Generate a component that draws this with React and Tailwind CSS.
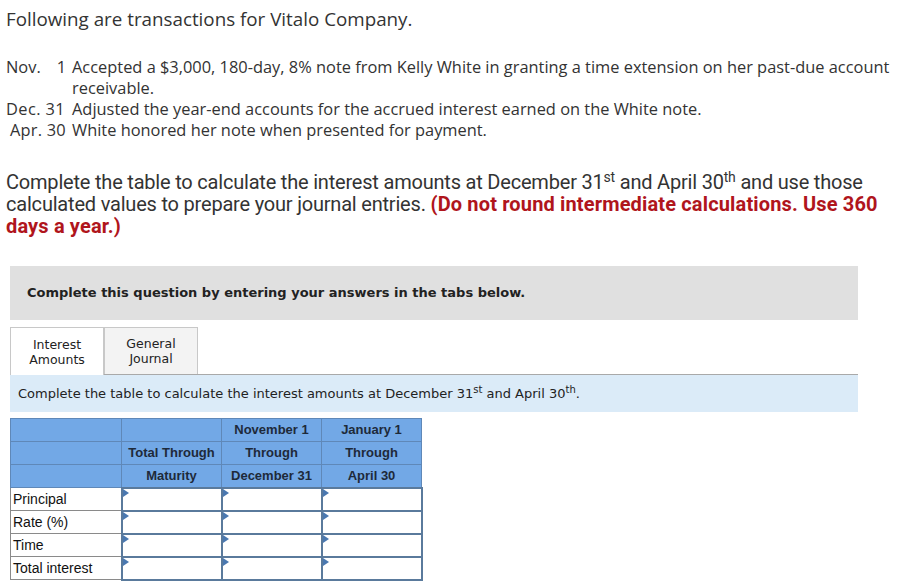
import React from 'react';

const rows = ['Principal', 'Rate (%)', 'Time', 'Total interest'];

const InputCell = () => (
  <td className="relative h-[23px] w-[100px] border-2 border-[#5a7a9c] bg-white p-0">
    <span className="absolute left-0 top-0 h-0 w-0 border-y-[4px] border-l-[6px] border-y-transparent border-l-[#4a78b0]" />
  </td>
);

const App = () => {
  return (
    <div className="w-[906px] h-[586px] bg-white text-[#333] overflow-hidden">
      <div className="pl-[6px] pt-[7px] text-[18.8px] leading-[24px] font-['Open_Sans',sans-serif]">
        Following are transactions for Vitalo Company.
      </div>

      <div className="mt-[25px] pl-[6px] text-[16.4px] leading-[21px] font-['Open_Sans',sans-serif]">
        <div className="flex">
          <span className="w-[60px] shrink-0 flex justify-between">
            <span>Nov.</span>
            <span>1</span>
          </span>
          <span className="pl-[6px]">Accepted a $3,000, 180-day, 8% note from Kelly White in granting a time extension on her past-due account</span>
        </div>
        <div className="pl-[66px]">receivable.</div>
        <div className="flex">
          <span className="w-[60px] shrink-0 tracking-[0.4px]">Dec. 31</span>
          <span className="pl-[6px]">Adjusted the year-end accounts for the accrued interest earned on the White note.</span>
        </div>
        <div className="flex">
          <span className="w-[60px] shrink-0 pl-[4px] tracking-[0.2px]">Apr. 30</span>
          <span className="pl-[6px]">White honored her note when presented for payment.</span>
        </div>
      </div>

      <p className="mt-[31px] pl-[6px] pr-[20px] text-[20px] leading-[22px] font-['Roboto',sans-serif] tracking-[-0.2px] text-[#333]">
        Complete the table to calculate the interest amounts at December 31<sup className="text-[14px] leading-none">st</sup> and April 30<sup className="text-[14px] leading-none">th</sup> and use those calculated values to prepare your journal entries.{' '}
        <span className="font-bold text-[#b0151c] tracking-[0.15px]">(Do not round intermediate calculations. Use 360 days a year.)</span>
      </p>

      <div className="mx-[10px] mt-[29px] w-[848px] h-[54px] bg-[#e0e0e0] flex items-center pl-[17px] font-['DejaVu_Sans',sans-serif] font-bold text-[13px] text-[#222]">
        Complete this question by entering your answers in the tabs below.
      </div>

      <div className="mx-[10px] mt-[7px] w-[848px] flex font-['DejaVu_Sans',sans-serif] text-[12.5px] leading-[15px] text-[#222]">
        <div className="w-[94px] h-[48px] border border-b-0 border-[#c8c8c8] bg-white flex flex-col items-center justify-center relative z-10 -mb-px">
          <span>Interest</span>
          <span>Amounts</span>
        </div>
        <div className="w-[94px] h-[47px] border border-[#c8c8c8] border-b-0 bg-[#f3f3f3] flex flex-col items-center justify-center">
          <span>General</span>
          <span>Journal</span>
        </div>
      </div>
      <div className="mx-[10px] w-[848px] h-[38px] border-t border-[#a9a9a9] bg-[#dbebf8] flex items-center pl-[8px] font-['DejaVu_Sans',sans-serif] text-[13px] text-[#222]">
        <span>
          Complete the table to calculate the interest amounts at December 31<sup className="text-[10px]">st</sup> and April 30<sup className="text-[10px]">th</sup>.
        </span>
      </div>

      <table className="ml-[10px] mt-[6px] border-collapse font-['Liberation_Sans',Arial,sans-serif] text-[13px] text-[#1e2a3a]">
        <thead className="font-bold text-center">
          <tr className="h-[23px] bg-[#72a8e6]">
            <th className="w-[111px] border border-[#5f88b8] p-0" />
            <th className="w-[100px] border border-[#5f88b8] p-0" />
            <th className="w-[100px] border border-[#5f88b8] p-0">November 1</th>
            <th className="w-[100px] border border-[#5f88b8] p-0">January 1</th>
          </tr>
          <tr className="h-[23px] bg-[#72a8e6]">
            <th className="border border-[#5f88b8] p-0" />
            <th className="border border-[#5f88b8] p-0">Total Through</th>
            <th className="border border-[#5f88b8] p-0">Through</th>
            <th className="border border-[#5f88b8] p-0">Through</th>
          </tr>
          <tr className="h-[23px] bg-[#72a8e6]">
            <th className="border border-[#5f88b8] p-0" />
            <th className="border border-[#5f88b8] p-0">Maturity</th>
            <th className="border border-[#5f88b8] p-0">December 31</th>
            <th className="border border-[#5f88b8] p-0">April 30</th>
          </tr>
        </thead>
        <tbody>
          {rows.map((r) => (
            <tr key={r} className="h-[23px]">
              <td className="border border-[#8a8a8a] px-[2px] py-0 text-[14px] text-[#111]">{r}</td>
              <InputCell />
              <InputCell />
              <InputCell />
            </tr>
          ))}
        </tbody>
      </table>
    </div>
  );
};

export default App;
